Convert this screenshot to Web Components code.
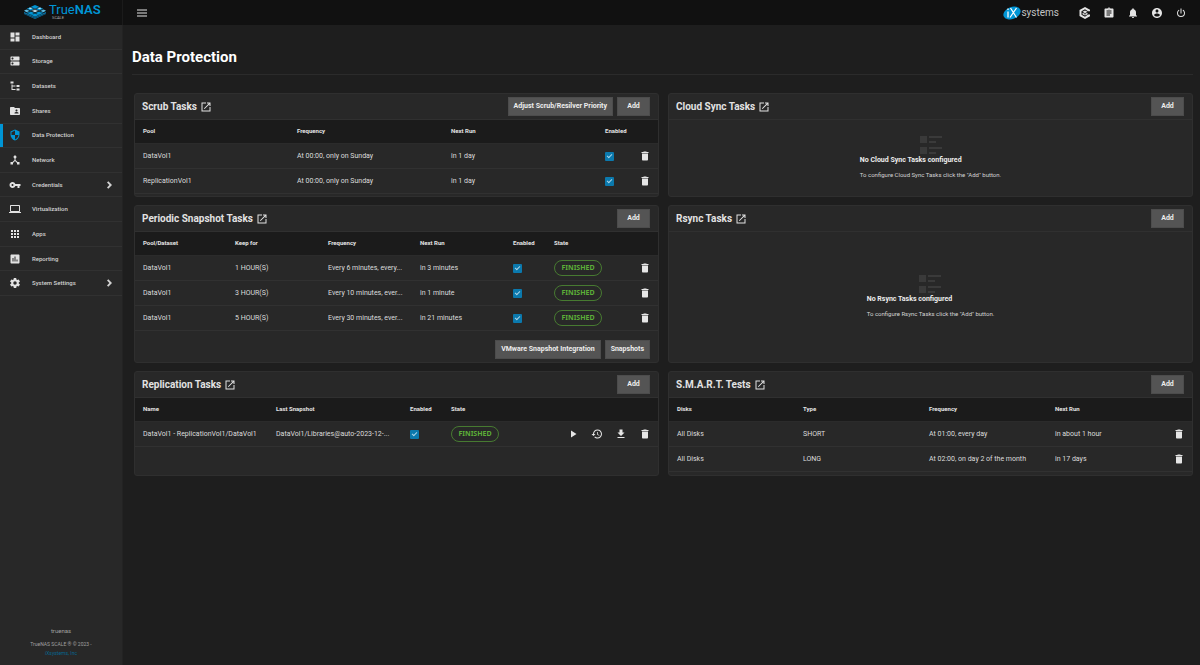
<!DOCTYPE html>
<html lang="en">
<head>
<meta charset="utf-8">
<meta name="viewport" content="width=device-width, initial-scale=1">
<title>TrueNAS - Data Protection</title>
<style>
  html, body { margin: 0; min-height: 100%; background: #1e1e1e; }
  body {
    --bg1: #1e1e1e; --bg2: #282828; --line: #333333; --fg: #dedede; --primary: #0095d5; --green: #5cae38;
    color: var(--fg); font: 7px/12px Roboto, "Liberation Sans", sans-serif;
  }
</style>
</head>
<body>
<tn-app></tn-app>
<script>
const ICONS = {
  dashboard: 'M13 3v6h8V3m-8 18h8V11h-8M3 21h8v-6H3m0-2h8V3H3v10z',
  storage: 'M20 13H4c-.55 0-1 .45-1 1v6c0 .55.45 1 1 1h16c.55 0 1-.45 1-1v-6c0-.55-.45-1-1-1zM7 19c-1.1 0-2-.9-2-2s.9-2 2-2 2 .9 2 2-.9 2-2 2zM20 3H4c-.55 0-1 .45-1 1v6c0 .55.45 1 1 1h16c.55 0 1-.45 1-1V4c0-.55-.45-1-1-1zM7 9c-1.1 0-2-.9-2-2s.9-2 2-2 2 .9 2 2-.9 2-2 2z',
  tree: 'M3 3H9V7H3V3M15 10H21V14H15V10M15 17H21V21H15V17M13 13H7V18H13V20H5V9H7V11H13V13Z',
  shares: 'M20 6h-8l-2-2H4c-1.1 0-1.99.9-1.99 2L2 18c0 1.1.9 2 2 2h16c1.1 0 2-.9 2-2V8c0-1.1-.9-2-2-2zm-5 3c1.1 0 2 .9 2 2s-.9 2-2 2-2-.9-2-2 .9-2 2-2zm4 8h-8v-1c0-1.33 2.67-2 4-2s4 .67 4 2v1z',
  shield: 'M12 1L3 5v6c0 5.55 3.84 10.74 9 12 5.16-1.26 9-6.45 9-12V5l-9-4zm0 10.99h7c-.53 4.12-3.28 7.79-7 8.94V12H5V6.3l7-3.11v8.8z',
  network: 'M17 16l-4-4V8.82C14.16 8.4 15 7.3 15 6c0-1.66-1.34-3-3-3S9 4.34 9 6c0 1.3.84 2.4 2 2.82V12l-4 4H3v5h5v-3.05l4-4.2 4 4.2V21h5v-5h-4z',
  key: 'M12.65 10C11.83 7.67 9.61 6 7 6c-3.31 0-6 2.69-6 6s2.69 6 6 6c2.61 0 4.83-1.67 5.65-4H17v4h4v-4h2v-4H12.65zM7 14c-1.1 0-2-.9-2-2s.9-2 2-2 2 .9 2 2-.9 2-2 2z',
  laptop: 'M20 18c1.1 0 1.99-.9 1.99-2L22 6c0-1.1-.9-2-2-2H4c-1.1 0-2 .9-2 2v10c0 1.1.9 2 2 2H0v2h24v-2h-4zM4 6h16v10H4V6z',
  apps: 'M4 8h4V4H4v4zm6 12h4v-4h-4v4zm-6 0h4v-4H4v4zm0-6h4v-4H4v4zm6 0h4v-4h-4v4zm6-10v4h4V4h-4zm-6 4h4V4h-4v4zm6 6h4v-4h-4v4zm0 6h4v-4h-4v4z',
  chart: 'M19 3H5c-1.1 0-2 .9-2 2v14c0 1.1.9 2 2 2h14c1.1 0 2-.9 2-2V5c0-1.1-.9-2-2-2zM9 17H7v-7h2v7zm4 0h-2V7h2v10zm4 0h-2v-4h2v4z',
  gear: 'M12 15.5A3.5 3.5 0 0 1 8.5 12 3.5 3.5 0 0 1 12 8.5a3.5 3.5 0 0 1 3.5 3.5 3.5 3.5 0 0 1-3.5 3.5m7.43-2.53c.04-.32.07-.64.07-.97s-.03-.66-.07-1l2.11-1.63c.19-.15.24-.42.12-.64l-2-3.46c-.12-.22-.39-.31-.61-.22l-2.49 1c-.52-.39-1.06-.73-1.69-.98l-.37-2.65A.506.506 0 0 0 14 2h-4c-.25 0-.46.18-.5.42l-.37 2.65c-.63.25-1.17.59-1.69.98l-2.49-1c-.22-.09-.49 0-.61.22l-2 3.46c-.13.22-.07.49.12.64L4.57 11c-.04.34-.07.67-.07 1s.03.65.07.97l-2.11 1.66c-.19.15-.25.42-.12.64l2 3.46c.12.22.39.3.61.22l2.49-1.01c.52.4 1.06.74 1.69.99l.37 2.65c.04.24.25.42.5.42h4c.25 0 .46-.18.5-.42l.37-2.65c.63-.26 1.17-.59 1.69-.99l2.49 1.01c.22.08.49 0 .61-.22l2-3.46c.12-.22.07-.49-.12-.64z',
  chevron: 'M8.6 4.6L6 7.2 10.8 12 6 16.8l2.600 2.600L16 12z',
  menu: 'M2 19h20v-2H2v2zm0-6h20v-2H2v2zm0-8v2h20V5H2z',
  launch: 'M19 19H5V5h7V3H3v18h18v-9h-2v7zM14 3v2h3.590l-9.830 9.830 1.410 1.410L19 6.410V10h2V3h-7z',
  trash: 'M6 19c0 1.1.9 2 2 2h8c1.1 0 2-.9 2-2V7H6v12zM19 4h-3.500l-1-1h-5l-1 1H5v2h14V4z',
  play: 'M8 5v14l11-7z',
  history: 'M13 3c-4.970 0-9 4.030-9 9H1l3.890 3.890.070.140L9 12H6c0-3.870 3.130-7 7-7s7 3.130 7 7-3.130 7-7 7c-1.930 0-3.680-.790-4.940-2.060l-1.420 1.420C8.270 19.990 10.510 21 13 21c4.970 0 9-4.030 9-9s-4.030-9-9-9zm-1 5v5l4.280 2.540.720-1.210-3.500-2.080V8H12z',
  download: 'M5 20H19V18H5M19 9H15V3H9V9H5L12 16L19 9Z',
  clipboard: 'M19 3h-4.180C14.400 1.840 13.300 1 12 1c-1.300 0-2.400.840-2.820 2H5c-1.100 0-2 .9-2 2v14c0 1.100.9 2 2 2h14c1.100 0 2-.9 2-2V5c0-1.100-.9-2-2-2zm-7 0c.550 0 1 .450 1 1s-.450 1-1 1-1-.450-1-1 .450-1 1-1zm2 14H7v-2h7v2zm3-4H7v-2h10v2zm0-4H7V7h10v2z',
  bell: 'M12 22c1.100 0 2-.9 2-2h-4c0 1.100.890 2 2 2zm6-6v-5c0-3.070-1.640-5.640-4.500-6.320V4c0-.830-.670-1.500-1.500-1.500s-1.500.670-1.500 1.500v.680C7.630 5.360 6 7.920 6 11v5l-2 2v1h16v-1l-2-2z',
  account: 'M12 2C6.480 2 2 6.480 2 12s4.480 10 10 10 10-4.480 10-10S17.520 2 12 2zm0 3c1.660 0 3 1.340 3 3s-1.340 3-3 3-3-1.340-3-3 1.340-3 3-3zm0 14.200c-2.500 0-4.710-1.280-6-3.220.030-1.990 4-3.080 6-3.080 1.990 0 5.970 1.090 6 3.080-1.290 1.940-3.500 3.220-6 3.220z',
  power: 'M16.560 5.440l-1.450 1.450A5.969 5.969 0 0 1 18 12a6 6 0 0 1-6 6 6 6 0 0 1-6-6c0-2.170 1.160-4.060 2.880-5.120L7.440 5.440A7.961 7.961 0 0 0 4 12a8 8 0 0 0 8 8 8 8 0 0 0 8-8c0-2.720-1.360-5.120-3.440-6.560M13 3h-2v10h2',
  command: 'M12 0L1 6v12l11 6 10-5.500V15h-4l-6 4.500-7-4V8.500l7-4 6 4h4V5.500zM12 7L7 9.700l5 2.600 5-2.600zM7 11.300v3.200l4.500 2.400v-3.200zM12.500 13.700v3.200l4.500-2.400v-3.200z'
};

const define = (name, css, html, setup) => {
  const template = document.createElement('template');
  template.innerHTML = `<style>${css}</style>${html}`;
  customElements.define(name, class extends HTMLElement {
    constructor() {
      super();
      this.attachShadow({ mode: 'open' }).append(template.content.cloneNode(true));
    }
    connectedCallback() {
      if (setup && !this.ready) { this.ready = true; setup(this, this.shadowRoot); }
    }
  });
};

define('tn-icon', `
  :host { display: block; flex: none; width: 12px; height: 12px; }
  svg { display: block; width: 100%; height: 100%; fill: currentColor; }`,
  `<svg viewBox="0 0 24 24" aria-hidden="true"><path/></svg>`,
  (host, root) => root.querySelector('path').setAttribute('d', ICONS[host.getAttribute('name')]));

define('tn-button', `
  :host { display: block; }
  button { box-sizing: border-box; display: block; height: 19px; min-width: 33px; padding: 0 5px; border: 1px solid #4c4c4c;
    background: #545454; color: #ededed; font: 700 7px/17px Roboto, sans-serif; white-space: nowrap; cursor: pointer; }`,
  `<button type="button"><slot></slot></button>`);

define('tn-brand', `
  :host { display: block; }
  a { display: flex; align-items: center; gap: 3px; color: var(--primary); text-decoration: none; }
  svg { display: block; width: 22px; height: 14px; }
  .word { display: block; font: 13px/12px Roboto, sans-serif; }
  b { font-weight: 600; }
  .sub { display: block; padding-left: 3px; font: 4px/4px Roboto, sans-serif; color: #b5b5b5; }`,
  `<a href="#" aria-label="TrueNAS SCALE">
    <svg viewBox="0 0 44 28" aria-hidden="true">
      <path fill="#0a7fb8" d="M0 14v4l22 10 22-10v-4L22 24z"/>
      <g fill="#0095d5">
        <path d="M22 0l8 3.700-8 3.700-8-3.700zM13.500 4l8 3.700-8 3.700-8-3.700zM30.500 4l8 3.700-8 3.700-8-3.700z"/>
        <path d="M22 16l8 3.700-8 3.700-8-3.700zM13.500 12l8 3.700-8 3.700-8-3.700zM30.500 12l8 3.700-8 3.700-8-3.700z"/>
      </g>
      <path fill="#c4e2f0" d="M22 8l7 3.300-7 3.300-7-3.300zM13 4.500l4 2-4 2-4-2zM31 4.500l4 2-4 2-4-2z"/>
      <path fill="#5dbce4" d="M5.500 8.500l6 2.800-6 3-5.500-3zM38.500 8.500l5.500 2.800-5.500 3-6-3z"/>
      <path stroke="#111111" stroke-width="1" fill="none" d="M4 8l22 10M12 4l23 11M40 8L18 18M32 4L9 15M0 17l22 9 22-9"/>
    </svg>
    <span><span class="word">True<b>NAS</b></span><span class="sub">SCALE</span></span>
  </a>`);

define('tn-topbar', `
  :host { display: flex; height: 25px; background: #111111; align-items: center; }
  .brand { box-sizing: border-box; width: 123px; height: 25px; padding: 4px 0 0 24px; border-right: 1px solid #1b1b1b; }
  button { display: block; padding: 0; border: 0; background: none; color: #e4e4e4; cursor: pointer; }
  .menu { margin-left: 13px; }
  .ix { margin-left: auto; display: flex; align-items: center; color: #c4c4c4; text-decoration: none; font: 400 10px/14px Roboto, sans-serif; }
  .ix svg { display: block; width: 18px; height: 16px; }
  nav { display: flex; gap: 12px; margin: 0 13px 0 20px; }`,
  `<div class="brand"><tn-brand></tn-brand></div>
  <button class="menu" type="button" aria-label="Toggle menu"><tn-icon name="menu"></tn-icon></button>
  <a class="ix" href="#" aria-label="iXsystems">
    <svg viewBox="0 0 36 32" aria-hidden="true"><ellipse cx="18" cy="16" rx="18" ry="12" transform="rotate(-22 18 16)" fill="#0095d5"/>
      <path d="M10 13v12M10 7v3M15 6l12 19M27 6L14 25" stroke="#fff" stroke-width="2.500" fill="none"/></svg>
    <span>systems</span>
  </a>
  <nav aria-label="Tools"></nav>`,
  (host, root) => {
    root.querySelector('nav').innerHTML = [['command', 'TrueCommand'], ['clipboard', 'Jobs'], ['bell', 'Alerts'], ['account', 'Account'], ['power', 'Power']]
      .map(([icon, label]) => `<button type="button" aria-label="${label}"><tn-icon name="${icon}"></tn-icon></button>`).join('');
  });

define('tn-nav-item', `
  :host { display: block; border-bottom: 1px solid #313131; }
  a { box-sizing: border-box; display: flex; align-items: center; height: 100%; padding: 0 6px 0 9px; color: #d2d2d2; text-decoration: none;
    font: 500 6px/12px Roboto, sans-serif; }
  .label { flex: 1; margin-left: 11px; }
  .arrow { display: none; }
  :host([expandable]) .arrow { display: block; }
  :host([active]) a { padding-left: 6px; border-left: 3px solid var(--primary); }
  .lead { color: #e2e2e2; }
  :host([active]) .lead { color: var(--primary); }`,
  `<a href="#"><span class="lead"></span><span class="label"><slot></slot></span><tn-icon class="arrow" name="chevron"></tn-icon></a>`,
  (host, root) => {
    root.querySelector('.lead').innerHTML = `<tn-icon name="${host.getAttribute('icon')}"></tn-icon>`;
  });

define('tn-sidenav', `
  :host { box-sizing: border-box; display: flex; flex-direction: column; justify-content: space-between; background: var(--bg2); border-right: 1px solid #232323; }
  nav { display: grid; grid-auto-rows: 1fr; height: 271px; }
  footer { padding-bottom: 7px; text-align: center; color: #a0a0a0; font: 5px/9px Roboto, sans-serif; }
  p { margin: 0; }
  .host { margin-bottom: 5px; font-size: 6px; }
  a { color: #07658f; text-decoration: none; }`,
  `<nav aria-label="Main">
    <tn-nav-item icon="dashboard">Dashboard</tn-nav-item>
    <tn-nav-item icon="storage">Storage</tn-nav-item>
    <tn-nav-item icon="tree">Datasets</tn-nav-item>
    <tn-nav-item icon="shares">Shares</tn-nav-item>
    <tn-nav-item icon="shield" active>Data Protection</tn-nav-item>
    <tn-nav-item icon="network">Network</tn-nav-item>
    <tn-nav-item icon="key" expandable>Credentials</tn-nav-item>
    <tn-nav-item icon="laptop">Virtualization</tn-nav-item>
    <tn-nav-item icon="apps">Apps</tn-nav-item>
    <tn-nav-item icon="chart">Reporting</tn-nav-item>
    <tn-nav-item icon="gear" expandable>System Settings</tn-nav-item>
  </nav>
  <footer><p class="host">truenas</p><p>TrueNAS SCALE ® © 2023 -</p><p><a href="#">iXsystems, Inc</a></p></footer>`);

define('tn-card', `
  :host { box-sizing: border-box; display: flex; flex-direction: column; min-width: 0; background: var(--bg2); border: 1px solid #2f2f2f; border-radius: 3px; }
  header { box-sizing: border-box; display: flex; align-items: center; gap: 4px; height: 26px; padding: 0 8px 0 7px; border-bottom: 1px solid #303030; }
  h2 { margin: 0 auto 0 0; font: 700 10px/14px Roboto, sans-serif; }
  h2 a { display: flex; align-items: center; gap: 3px; color: #e2e2e2; text-decoration: none; }
  .body { flex: 1; display: flex; flex-direction: column; }
  footer { display: flex; justify-content: flex-end; gap: 4px; padding: 0 8px 0 7px; }
  footer.used { padding-bottom: 3px; }`,
  `<header><h2><a href="#"><span class="title"></span><tn-icon name="launch"></tn-icon></a></h2><slot name="action"></slot><tn-button>Add</tn-button></header>
  <div class="body"><slot></slot></div>
  <footer><slot name="footer"></slot></footer>`,
  (host, root) => {
    root.querySelector('.title').textContent = host.getAttribute('heading');
    root.querySelector('footer').classList.toggle('used', !!host.querySelector('[slot=footer]'));
  });

define('tn-status', `
  :host { box-sizing: border-box; display: inline-block; width: 48px; border: 1px solid #477a31; border-radius: 8px; text-align: center;
    color: var(--green); font: 700 7px/14px "Noto Sans", sans-serif; vertical-align: middle; }`,
  `<slot></slot>`);

const TABLES = {
  scrub: {
    widths: [154, 154, 154, 61], head: ['Pool', 'Frequency', 'Next Run', 'Enabled'],
    rows: [['DataVol1', 'At 00:00, only on Sunday', 'in 1 day', true], ['ReplicationVol1', 'At 00:00, only on Sunday', 'in 1 day', true]]
  },
  snapshot: {
    widths: [92, 93, 92, 93, 41, 112], head: ['Pool/Dataset', 'Keep for', 'Frequency', 'Next Run', 'Enabled', 'State'],
    rows: [
      ['DataVol1', '1 HOUR(S)', 'Every 6 minutes, every...', 'in 3 minutes', true, 'FINISHED'],
      ['DataVol1', '3 HOUR(S)', 'Every 10 minutes, ever...', 'in 1 minute', true, 'FINISHED'],
      ['DataVol1', '5 HOUR(S)', 'Every 30 minutes, ever...', 'in 21 minutes', true, 'FINISHED']]
  },
  replication: {
    widths: [133, 134, 41, 215], head: ['Name', 'Last Snapshot', 'Enabled', 'State'],
    actions: [['play', 'Run now'], ['history', 'Restore'], ['download', 'Download'], ['trash', 'Delete']],
    rows: [['DataVol1 - ReplicationVol1/DataVol1', 'DataVol1/Libraries@auto-2023-12-...', true, 'FINISHED']]
  },
  smart: {
    widths: [126, 126, 126, 145], head: ['Disks', 'Type', 'Frequency', 'Next Run'],
    rows: [['All Disks', 'SHORT', 'At 01:00, every day', 'in about 1 hour'], ['All Disks', 'LONG', 'At 02:00, on day 2 of the month', 'in 17 days']]
  }
};

define('tn-table', `
  :host { display: block; }
  table { width: 100%; table-layout: fixed; border-collapse: separate; border-spacing: 0; }
  th, td { box-sizing: border-box; padding: 0 4px 0 8px; text-align: left; white-space: nowrap; overflow: hidden; text-overflow: ellipsis; }
  th { height: 24px; padding: 0 0 2px 8px; background: #1b1b1b; border-bottom: 1px solid #2b2b2b; font: 700 6px/12px Roboto, sans-serif; color: #e4e4e4; }
  td { height: 25px; border-bottom: 1px solid #313131; font: 7px/12px Roboto, sans-serif; color: #dcdcdc; }
  td:last-child { padding-right: 7px; }
  .last { display: flex; align-items: center; justify-content: space-between; }
  .actions { display: flex; gap: 12px; }
  button { display: block; padding: 0; border: 0; background: none; color: #e6e6e6; cursor: pointer; }
  input { appearance: none; display: grid; place-items: start center; width: 9px; height: 9px; margin: 0; border-radius: 1px; background: #0b79ad; }
  input::before { content: ""; width: 2px; height: 4px; margin-top: 1px; border: solid #a9d4e8; border-width: 0 1px 1px 0; transform: rotate(45deg); }`,
  `<table><colgroup></colgroup><thead><tr></tr></thead><tbody></tbody></table>`,
  (host, root) => {
    const data = TABLES[host.getAttribute('source')];
    const value = (v, row) => v === true ? `<input type="checkbox" checked aria-label="Enabled: ${row[0]}">`
      : v === 'FINISHED' ? `<tn-status>${v}</tn-status>` : `<span>${v}</span>`;
    const actions = (data.actions || [['trash', 'Delete']])
      .map(([icon, label]) => `<button type="button" aria-label="${label}"><tn-icon name="${icon}"></tn-icon></button>`).join('');
    root.querySelector('colgroup').innerHTML = data.widths.map(w => `<col style="width:${w}px">`).join('');
    root.querySelector('thead tr').innerHTML = data.head.map(h => `<th scope="col">${h}</th>`).join('');
    root.querySelector('tbody').innerHTML = data.rows.map(row => '<tr>' + row.map((v, i) => i < row.length - 1
      ? `<td>${value(v, row)}</td>`
      : `<td><div class="last">${value(v, row)}<div class="actions">${actions}</div></div></td>`).join('') + '</tr>').join('');
  });

define('tn-empty', `
  :host { flex: 1; display: flex; align-items: center; justify-content: center; }
  svg { display: block; width: 22px; height: 18px; margin: 0 auto; fill: #3a3a3a; }
  h3 { margin: 0; font: 700 7px/12px Roboto, sans-serif; color: #ededed; }
  p { margin: 3px 0 0; font-size: 6px; color: #d4d4d4; }`,
  `<div><svg viewBox="0 0 22 18" aria-hidden="true"><path d="M0 0h7v7H0zM9 0h13v2H9zM9 5h7v2H9zM0 11h7v7H0zM9 11h13v2H9zM9 16h7v2H9z"/></svg>
  <h3></h3><p></p></div>`,
  (host, root) => {
    const kind = host.getAttribute('kind');
    root.querySelector('h3').textContent = `No ${kind} configured`;
    root.querySelector('p').textContent = `To configure ${kind} click the "Add" button.`;
  });

define('tn-app', `
  :host { display: grid; grid-template: auto 1fr / 123px 1fr; min-height: 100vh; }
  tn-topbar { grid-column: 1 / -1; }
  main { min-width: 0; padding: 21px 7px 0 9px; }
  h1 { margin: 0 0 18px; padding-bottom: 6px; border-bottom: 1px solid #2b2b2b; font: 700 15px/22px Roboto, sans-serif; color: #ffffff; }
  .cards { display: grid; grid-template-columns: 1fr 1fr; grid-template-rows: minmax(104px, auto) minmax(158px, auto) minmax(105px, auto); gap: 8px 9px; padding-left: 2px; }`,
  `<tn-topbar></tn-topbar>
  <tn-sidenav></tn-sidenav>
  <main>
    <h1>Data Protection</h1>
    <div class="cards">
      <tn-card heading="Scrub Tasks"><tn-button slot="action">Adjust Scrub/Resilver Priority</tn-button><tn-table source="scrub"></tn-table></tn-card>
      <tn-card heading="Cloud Sync Tasks"><tn-empty kind="Cloud Sync Tasks"></tn-empty></tn-card>
      <tn-card heading="Periodic Snapshot Tasks"><tn-table source="snapshot"></tn-table>
        <tn-button slot="footer">VMware Snapshot Integration</tn-button><tn-button slot="footer">Snapshots</tn-button></tn-card>
      <tn-card heading="Rsync Tasks"><tn-empty kind="Rsync Tasks"></tn-empty></tn-card>
      <tn-card heading="Replication Tasks"><tn-table source="replication"></tn-table></tn-card>
      <tn-card heading="S.M.A.R.T. Tests"><tn-table source="smart"></tn-table></tn-card>
    </div>
  </main>`);
</script>
</body>
</html>
